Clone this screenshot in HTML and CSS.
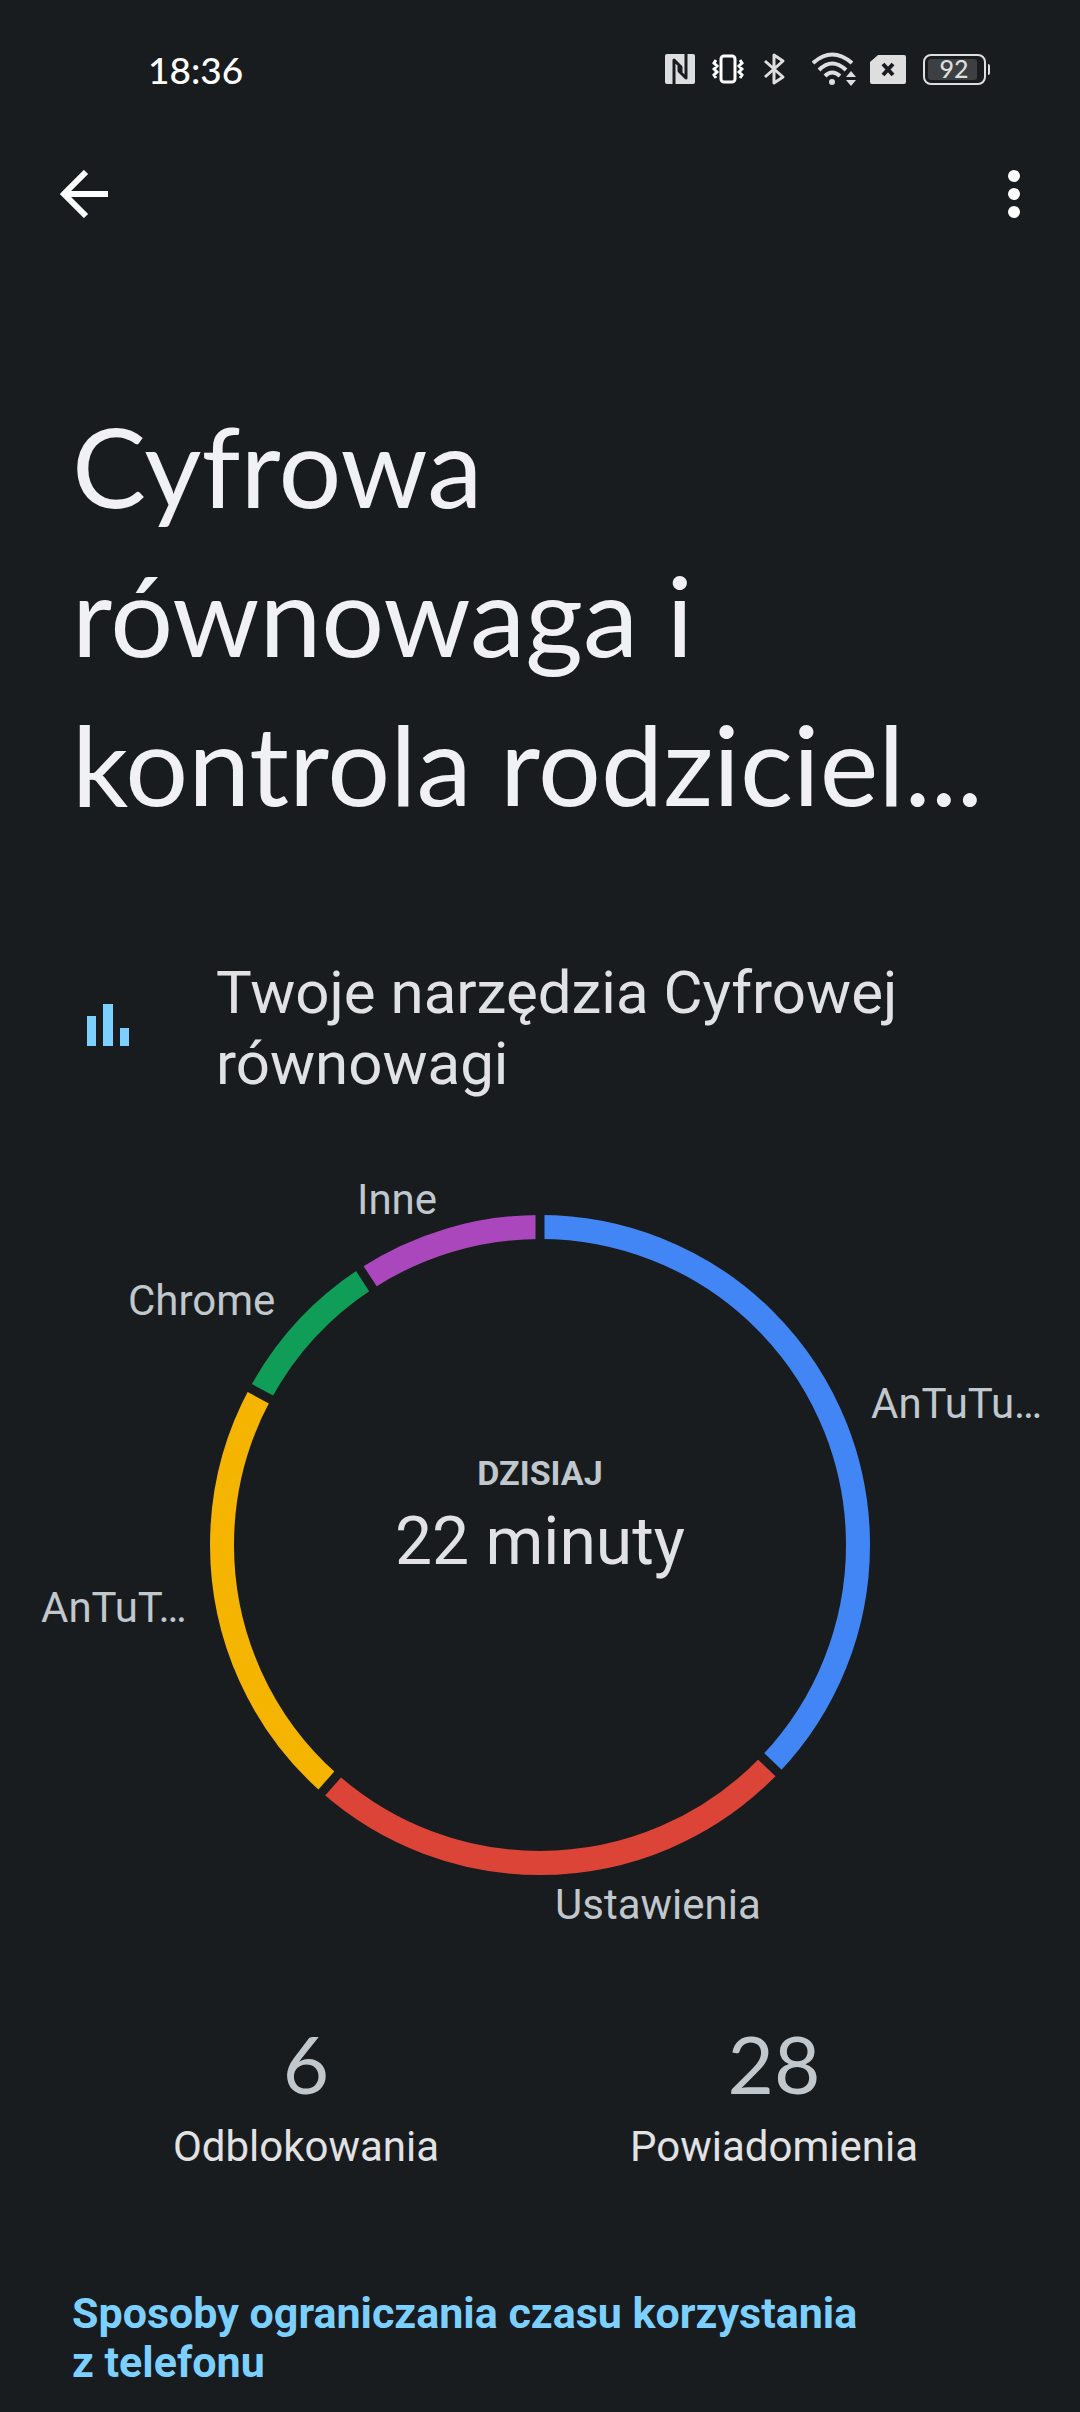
FILE: index.html
```html
<!DOCTYPE html>
<html lang="pl">
<head>
    <meta charset="utf-8">
    <meta name="viewport" content="width=device-width">
    <title>Cyfrowa równowaga</title>
    <link rel="stylesheet" href="styles.css">
</head>
<body>
<div class="statusbar">
    <span class="clock">18:36</span>
    <div class="statusicons">
        <!-- nfc -->
        <svg class="nfc" width="30" height="34" viewBox="0 0 30 34">
            <rect x="0" y="2" width="30" height="30" rx="2" fill="#dedede"/>
            <path d="M9 32V8L16 15V20M21 2V26L14 19V14" fill="none" stroke="#191c1e" stroke-width="3" stroke-linejoin="round"/>
        </svg>
        <!-- vibrate -->
        <svg class="vibrate" width="32" height="34" viewBox="0 0 32 34" fill="none" stroke="#fff">
            <rect x="9" y="4" width="14" height="26" rx="3" stroke-width="3"/>
            <path d="M4 8L2 11L5 14L2 17L5 20L2 23L4 26M28 8L30 11L27 14L30 17L27 20L30 23L28 26" stroke-width="3"/>
        </svg>
        <!-- bluetooth -->
        <svg class="bluetooth" width="22" height="34" viewBox="0 0 22 34">
            <path d="M1 9L19 25L10 31V3L19 9L1 25" fill="none" stroke="#dedede" stroke-width="3" stroke-linejoin="round"/>
        </svg>
        <!-- wifi -->
        <svg class="wifi" width="45" height="34" viewBox="0 0 45 34">
            <g fill="none" stroke="#dedede" stroke-width="4">
                <path d="M1 11Q20 -6 40 11"/>
                <path d="M7 18Q20 5 34 18"/>
                <path d="M13 24Q20 17 28 24"/>
            </g>
            <circle cx="20" cy="30" r="3" fill="#dedede"/>
            <path d="M34 25L39 19L44 25ZM34 28L39 34L44 28Z" fill="#dedede"/>
        </svg>
        <!-- sim -->
        <svg class="sim" width="36" height="34" viewBox="0 0 36 34">
            <path d="M8 3H34Q36 3 36 5V30Q36 32 34 32H2Q0 32 0 30V10Z" fill="#dedede"/>
            <path d="M13 12L23 23M23 12L13 23" stroke="#191c1e" stroke-width="4"/>
        </svg>
        <!-- battery -->
        <svg width="68" height="34" viewBox="0 0 68 34">
            <rect x="1" y="3" width="61" height="29" rx="7" fill="none" stroke="#dedede" stroke-width="2"/>
            <rect x="5" y="7" width="49" height="21" rx="3" fill="#3c4043"/>
            <path d="M65 12Q67 12 67 14V21Q67 23 65 23Z" fill="#dedede"/>
            <text class="batterytext" x="31" y="26">92</text>
        </svg>
    </div>
</div>

<header class="appbar">
    <button class="iconbutton" aria-label="Wstecz">
        <svg width="48" height="48" viewBox="0 0 48 48">
            <path d="M26 2L4 24L26 46M4 24H48" fill="none" stroke="#fff" stroke-width="6"/>
        </svg>
    </button>
    <button class="iconbutton" aria-label="Więcej opcji">
        <svg width="12" height="48" viewBox="0 0 12 48" fill="#fff">
            <circle cx="6" cy="6" r="6"/>
            <circle cx="6" cy="24" r="6"/>
            <circle cx="6" cy="42" r="6"/>
        </svg>
    </button>
</header>

<main>
    <h1 class="pagetitle">Cyfrowa<br>równowaga i<br>kontrola rodziciel...</h1>

    <section class="tools">
        <svg class="toolsicon" width="42" height="48" viewBox="0 0 42 48" fill="#7cd0ff">
            <rect x="0" y="12" width="9" height="30"/>
            <rect x="16" y="0" width="10" height="42"/>
            <rect x="33" y="24" width="9" height="18"/>
        </svg>
        <h2 class="toolstitle">Twoje narzędzia Cyfrowej<br>równowagi</h2>
    </section>

    <!-- one full turn of the ring is 360 units -->
    <svg class="chart" viewBox="0 0 1080 800">
        <g class="ring" transform="rotate(-90 540 395)">
            <circle class="blue" cx="540" cy="395" r="318" pathLength="360" stroke-dasharray="133.7 226.3"/>
            <circle class="red" cx="540" cy="395" r="318" pathLength="360" stroke-dasharray="87.7 272.3" stroke-dashoffset="-133.7"/>
            <circle class="yellow" cx="540" cy="395" r="318" pathLength="360" stroke-dasharray="77 283" stroke-dashoffset="-221.4"/>
            <circle class="green" cx="540" cy="395" r="318" pathLength="360" stroke-dasharray="28.5 331.5" stroke-dashoffset="-298.4"/>
            <circle class="purple" cx="540" cy="395" r="318" pathLength="360" stroke-dasharray="33.1 326.9" stroke-dashoffset="-326.9"/>
        </g>
        <g class="gaps">
            <path d="M540 60V95"/>
            <path d="M540 60V95" transform="rotate(133.7 540 395)"/>
            <path d="M540 60V95" transform="rotate(221.4 540 395)"/>
            <path d="M540 60V95" transform="rotate(298.4 540 395)"/>
            <path d="M540 60V95" transform="rotate(326.9 540 395)"/>
        </g>
        <text class="label" x="357" y="64">Inne</text>
        <text class="label" x="128" y="165">Chrome</text>
        <text class="label" x="871" y="268">AnTuTu…</text>
        <text class="label" x="41" y="472">AnTuT…</text>
        <text class="label" x="555" y="769">Ustawienia</text>
        <text class="today" x="540" y="335">DZISIAJ</text>
        <text class="total" x="540" y="414">22 minuty</text>
    </svg>

    <section class="stats">
        <div class="stat">
            <div class="number">6</div>
            <div class="caption">Odblokowania</div>
        </div>
        <div class="stat">
            <div class="number">28</div>
            <div class="caption">Powiadomienia</div>
        </div>
    </section>

    <h3 class="subheader">Sposoby ograniczania czasu korzystania<br>z telefonu</h3>
</main>
</body>
</html>
```
FILE: styles.css
```css
body {
    margin: 0;
    background-color: #191c1e;
    color: #e2e2e4;
    font-family: Roboto, sans-serif;
}

h1, h2, h3 {
    margin: 0;
    font-weight: 400;
}

svg {
    display: block;
}

.statusbar {
    display: flex;
    justify-content: space-between;
    align-items: center;
    height: 138px;
    padding: 0 89px 0 148px;
}

.clock {
    color: #fff;
    font-family: Lato, sans-serif;
    font-size: 37px;
    font-weight: 500;
}

.statusicons {
    display: flex;
}

.nfc, .sim {
    margin-right: 17px;
}

.vibrate {
    margin-right: 20px;
}

.bluetooth {
    margin-right: 26px;
}

.wifi {
    margin-right: 13px;
}

.batterytext {
    fill: #dedede;
    font-family: Lato, sans-serif;
    font-size: 25px;
    font-weight: 500;
    text-anchor: middle;
}

.appbar {
    display: flex;
    justify-content: space-between;
    align-items: center;
    height: 112px;
    padding: 0 60px;
}

.iconbutton {
    padding: 0;
    border: 0;
    background: none;
}

.pagetitle {
    margin: 141px 72px 0;
    color: #f1f0f4;
    font-family: Lato, sans-serif;
    font-size: 111px;
    line-height: 149px;
    white-space: nowrap;
}

.tools {
    display: flex;
    align-items: center;
    gap: 87px;
    margin-top: 119px;
    padding: 0 87px;
}

.toolstitle {
    font-size: 60px;
    line-height: 71px;
}

.chart {
    width: 100%;
    margin-top: 51px;
}

.ring circle {
    fill: none;
    stroke-width: 24;
}

.ring .blue {
    stroke: #4285f4;
}

.ring .red {
    stroke: #db4437;
}

.ring .yellow {
    stroke: #f4b400;
}

.ring .green {
    stroke: #0f9d58;
}

.ring .purple {
    stroke: #ab47bc;
}

.gaps path {
    stroke: #191c1e;
    stroke-width: 9;
}

.label {
    fill: #c0c7cd;
    font-size: 42px;
}

.today {
    fill: #c0c7cd;
    font-size: 34px;
    font-weight: 700;
    text-anchor: middle;
}

.total {
    fill: #e2e2e4;
    font-size: 66px;
    text-anchor: middle;
}

.stats {
    display: grid;
    grid-template-columns: 1fr 1fr;
    margin-top: 64px;
    padding: 0 72px;
    text-align: center;
}

.number {
    color: #c0c7cd;
    font-family: Lato, sans-serif;
    font-size: 80px;
    line-height: 98px;
}

.caption {
    margin-top: 10px;
    font-size: 42px;
    line-height: 50px;
}

.subheader {
    margin: 117px 72px 0;
    color: #7cd0ff;
    font-size: 43px;
    font-weight: 700;
    line-height: 49px;
}
```
